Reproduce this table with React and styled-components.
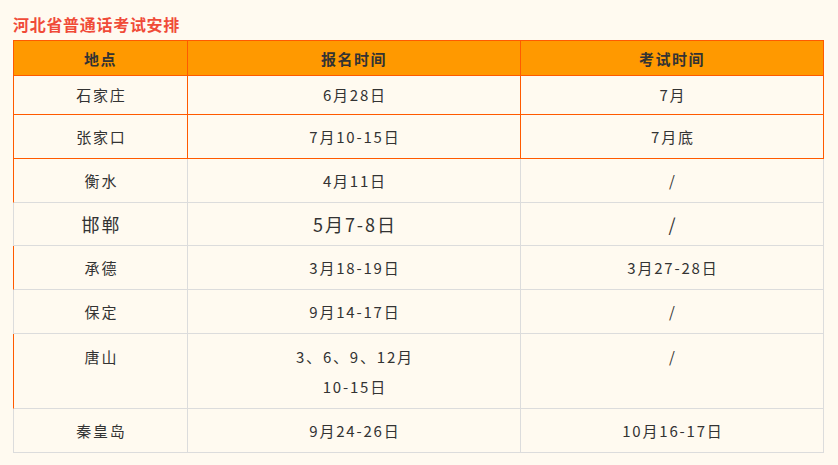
import React from "react";
import styled, { createGlobalStyle } from "styled-components";

const ORANGE_LINE = "#ff5a00";
const GREY_LINE = "#dcdcdc";

const rows = [
	{ place: "石家庄", sign: ["6月28日"], exam: "7月", h: 39, hot: true },
	{ place: "张家口", sign: ["7月10-15日"], exam: "7月底", h: 44, hot: true },
	{ place: "衡水", sign: ["4月11日"], exam: "/", h: 44, edge: true },
	{ place: "邯郸", sign: ["5月7-8日"], exam: "/", h: 43, big: true },
	{ place: "承德", sign: ["3月18-19日"], exam: "3月27-28日", h: 44, edge: true },
	{ place: "保定", sign: ["9月14-17日"], exam: "/", h: 44 },
	{ place: "唐山", sign: ["3、6、9、12月", "10-15日"], exam: "/", h: 75, edge: true, top: true },
	{ place: "秦皇岛", sign: ["9月24-26日"], exam: "10月16-17日", h: 44 },
];

const App = () => {
	return (
		<Page>
			<GlobalStyle />
			<Title>河北省普通话考试安排</Title>
			<Grid>
				{/* header */}
				<Head first>地点</Head>
				<Head>报名时间</Head>
				<Head>考试时间</Head>

				{rows.map((r) => (
					<React.Fragment key={r.place}>
						<Cell
							first
							h={r.h}
							hot={r.hot}
							edge={r.edge}
							big={r.big}
							top={r.top}
						>
							{r.place}
						</Cell>
						<Cell h={r.h} hot={r.hot} big={r.big} top={r.top}>
							{r.sign.map((line) => (
								<span key={line}>{line}</span>
							))}
						</Cell>
						<Cell h={r.h} hot={r.hot} big={r.big} top={r.top}>
							{r.exam}
						</Cell>
					</React.Fragment>
				))}
			</Grid>
		</Page>
	);
};

const GlobalStyle = createGlobalStyle`
	body {
		margin: 0;
		background: #fffaf0;
	}
`;

const Page = styled.div`
	padding: 12px 14px 0 13px;
	font-family: "Noto Sans CJK SC", "Noto Sans", sans-serif;
	color: #333;
`;

const Title = styled.h2`
	margin: 0 0 4px;
	height: 24px;
	font-size: 16px;
	line-height: 24px;
	font-weight: bold;
	letter-spacing: 0.7px;
	color: #f04b38;
`;

const Grid = styled.div`
	display: grid;
	grid-template-columns: 175px 333px 303px;
`;

const Head = styled.div`
	display: flex;
	align-items: center;
	justify-content: center;
	box-sizing: border-box;
	height: 36px;
	background: #ff9900;
	border-top: 1px solid ${ORANGE_LINE};
	border-right: 1px solid ${ORANGE_LINE};
	border-bottom: 1px solid ${ORANGE_LINE};
	border-left: ${(p) => (p.first ? `1px solid ${ORANGE_LINE}` : "none")};
	font-size: 15px;
	font-weight: bold;
	letter-spacing: 1.5px;
	color: #333;
`;

const Cell = styled.div`
	display: flex;
	flex-direction: column;
	align-items: center;
	justify-content: ${(p) => (p.top ? "flex-start" : "center")};
	box-sizing: border-box;
	height: ${(p) => p.h}px;
	padding-top: ${(p) => (p.top ? "8px" : "0")};
	border-right: 1px solid ${(p) => (p.hot ? ORANGE_LINE : GREY_LINE)};
	border-bottom: 1px solid ${(p) => (p.hot ? ORANGE_LINE : GREY_LINE)};
	border-left: ${(p) =>
		p.first
			? `1px solid ${p.hot || p.edge ? ORANGE_LINE : GREY_LINE}`
			: "none"};
	font-size: ${(p) => (p.big ? "18px" : "15px")};
	line-height: 30px;
	letter-spacing: ${(p) => (p.big ? "2px" : "1.8px")};
	text-indent: ${(p) => (p.big ? "2px" : "1.8px")};
`;

export default App;
